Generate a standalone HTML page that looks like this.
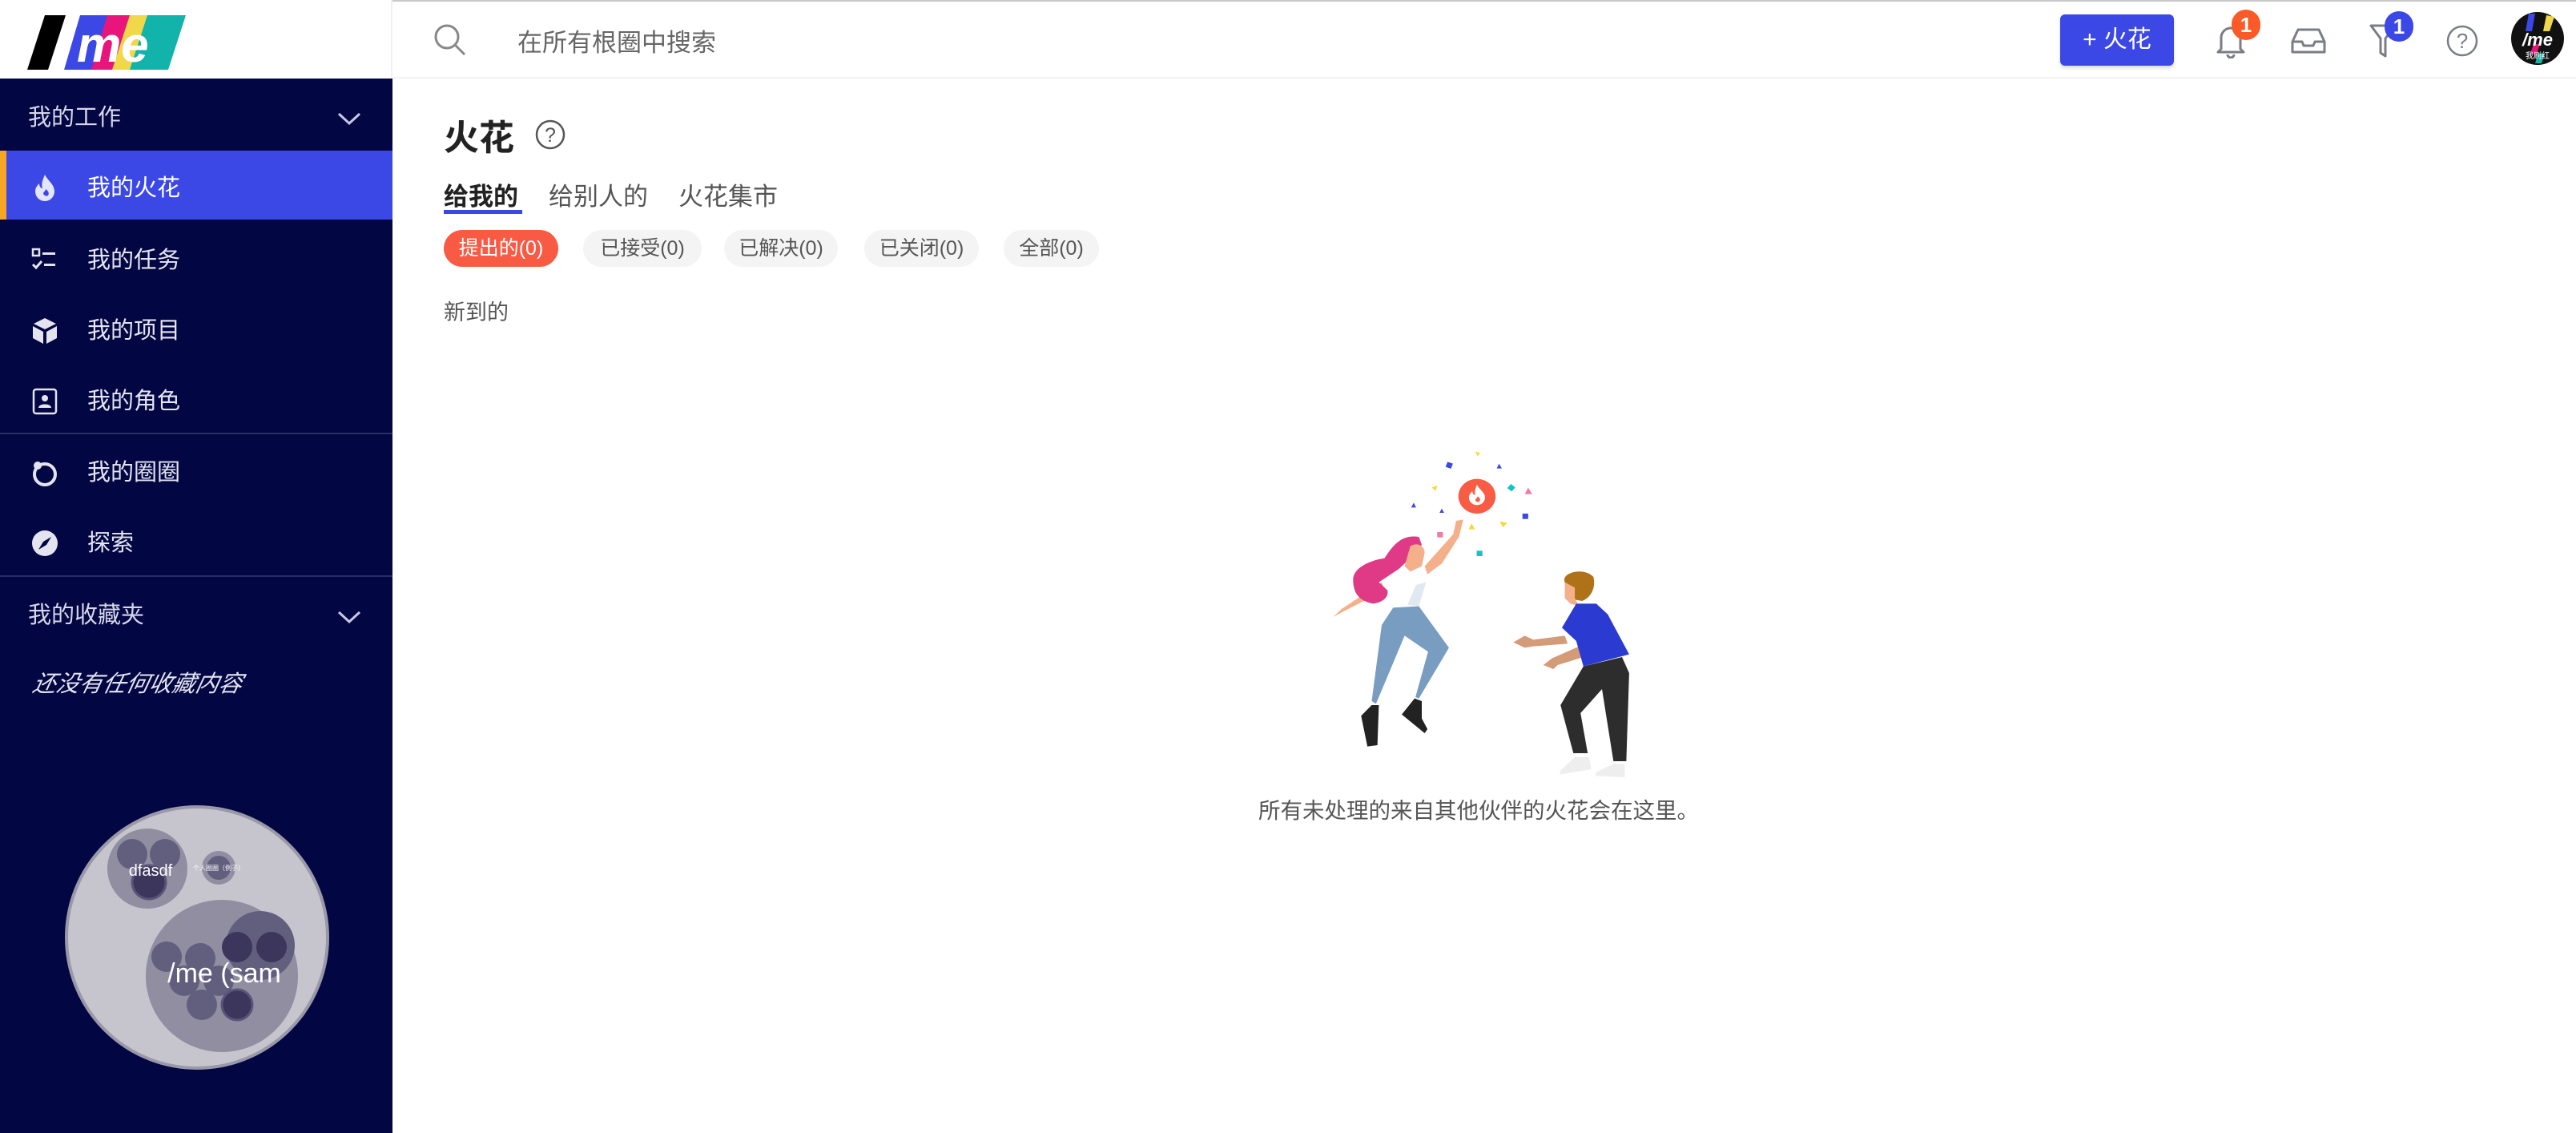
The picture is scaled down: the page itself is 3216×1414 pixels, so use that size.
<!DOCTYPE html>
<html><head><meta charset="utf-8">
<style>
*{margin:0;padding:0;box-sizing:border-box}
body{width:3216px;height:1414px;overflow:hidden;background:#fff;font-family:"Liberation Sans","Noto Sans CJK SC",sans-serif;position:relative}
.abs{position:absolute}
#side{left:0;top:98px;width:490px;height:1316px;background:#020642}
.hdrL{left:0;top:0;width:490px;height:98px;background:#fff;border-right:2px solid #f0f0f0}
.item{position:absolute;left:0;width:490px;height:88px;color:#e4e4f0;font-size:29px;line-height:88px}
.item .t{position:absolute;left:109px;top:0}
.item svg{position:absolute;left:38px;top:26px}
.sel{background:#3b48e6;color:#fff}
.sel:before{content:"";position:absolute;left:0;top:0;width:8px;height:100%;background:#f5a623}
.div{position:absolute;left:0;width:490px;height:2px;background:#2a2d62}
.sh{position:absolute;left:35px;color:#d6d6ea;font-size:29px}
.pill{position:absolute;top:287px;height:46px;border-radius:23px;background:#f4f4f4;color:#555;font-size:25px;line-height:46px;text-align:center}
</style></head><body>
<div class="abs hdrL">
<svg class="abs" style="left:34px;top:19px" width="200" height="70" viewBox="0 0 200 70">
<polygon points="22,0 48,0 26,68 0,68" fill="#000"/>
<polygon points="78,0 104,0 82,68 46,68 66,0" fill="#3b48e6"/>
<polygon points="100,0 130,0 108,68 80,68" fill="#e8157a"/>
<polygon points="128,0 152,0 130,68 106,68" fill="#f0d84a"/>
<polygon points="150,0 198,0 176,68 128,68" fill="#11b3aa"/>
<text x="62" y="58" font-size="62" font-weight="bold" font-style="italic" fill="#fff" font-family="Liberation Sans">me</text>
</svg>
</div>
<div class="abs" style="left:490px;top:0;width:2726px;height:98px;border-bottom:2px solid #f2f2f2;border-top:2px solid #c8c8c8"></div>
<svg class="abs" style="left:540px;top:28px" width="44" height="44" viewBox="0 0 44 44"><circle cx="18" cy="18" r="14" stroke="#888" stroke-width="3" fill="none"/><line x1="28" y1="28" x2="40" y2="40" stroke="#888" stroke-width="3"/></svg>
<div class="abs" style="left:646px;top:28px;font-size:31px;color:#666">在所有根圈中搜索</div>
<div class="abs" style="left:2572px;top:18px;width:142px;height:64px;background:#3b48e6;border-radius:6px;color:#fff;font-size:30px;line-height:64px;text-align:center;box-shadow:0 3px 4px rgba(0,0,0,.15)">+ 火花</div>
<svg class="abs" style="left:2765px;top:27px" width="40" height="46" viewBox="0 0 40 46"><path d="M8 34 V20 a12 12 0 0 1 24 0 V34 l4 4 H4 z" fill="none" stroke="#7a7d85" stroke-width="3" stroke-linejoin="round"/><path d="M16 41 a4 4 0 0 0 8 0" stroke="#7a7d85" stroke-width="3" fill="none"/></svg>
<div class="abs" style="left:2786px;top:12px;width:36px;height:38px;border-radius:18px;background:#fa5a28;color:#fff;font-size:26px;font-weight:bold;text-align:center;line-height:38px">1</div>
<svg class="abs" style="left:2859px;top:34px" width="46" height="34" viewBox="0 0 46 34"><path d="M3 18 L10 3 H36 L43 18 V31 H3 Z M3 18 H15 L17 23 H29 L31 18 H43" fill="none" stroke="#7a7d85" stroke-width="3" stroke-linejoin="round"/></svg>
<svg class="abs" style="left:2958px;top:28px" width="34" height="44" viewBox="0 0 34 44"><path d="M2 4 H32 L20 20 V42 L14 38 V20 Z" fill="none" stroke="#7a7d85" stroke-width="3" stroke-linejoin="round"/></svg>
<div class="abs" style="left:2977px;top:14px;width:36px;height:38px;border-radius:18px;background:#3b48e6;color:#fff;font-size:26px;font-weight:bold;text-align:center;line-height:38px">1</div>
<svg class="abs" style="left:3054px;top:31px" width="40" height="40" viewBox="0 0 40 40"><circle cx="20" cy="20" r="18" fill="none" stroke="#7a7d85" stroke-width="2.5"/><text x="20" y="29" font-size="26" text-anchor="middle" fill="#7a7d85" font-family="Liberation Sans">?</text></svg>
<svg class="abs" style="left:3135px;top:15px" width="66" height="66" viewBox="0 0 66 66"><circle cx="33" cy="33" r="33" fill="#111"/><polygon points="22,2 30,2 26,24 18,24" fill="#3b48e6"/><polygon points="44,4 54,6 48,24 40,24" fill="#f0d84a"/><polygon points="28,40 36,40 32,52 24,52" fill="#e8157a"/><polygon points="34,52 42,52 38,64 30,64" fill="#11b3aa"/><text x="33" y="42" font-size="22" font-weight="bold" font-style="italic" fill="#fff" text-anchor="middle" font-family="Liberation Sans">/me</text><text x="33" y="58" font-size="10" fill="#fff" text-anchor="middle" font-family="Noto Sans CJK SC">我刷红</text></svg>

<div id="side" class="abs">
<div class="sh" style="top:25px">我的工作</div>
<svg class="abs" style="left:420px;top:40px" width="32" height="20" viewBox="0 0 32 20"><path d="M3 4 L16 16 L29 4" stroke="#c8c8e6" stroke-width="3" fill="none"/></svg>
<div class="item sel" style="top:90px;height:86px;line-height:94px"><svg width="36" height="36" viewBox="0 0 36 36" style="top:28px"><path d="M18 2 C22 10 30 14 30 23 a12 12 0 0 1 -24 0 c0-5 3-8 5-10 c0 4 2 6 4 6 c-2-6 1-12 3-17z" fill="#e4e6ff"/><path d="M19 20 c3 2 5 5 3 8 a4 4 0 0 1 -6 -3 c1-2 3-3 3-5z" fill="#3b48e6"/></svg><span class="t">我的火花</span></div>
<div class="item" style="top:183px"><svg width="36" height="36" viewBox="0 0 36 36"><rect x="3" y="4" width="8" height="8" fill="none" stroke="#e4e4f0" stroke-width="2.5"/><path d="M3 23 l4 4 l7 -8" stroke="#e4e4f0" stroke-width="3" fill="none"/><rect x="15" y="8" width="16" height="3" fill="#e4e4f0"/><rect x="17" y="22" width="14" height="3" fill="#e4e4f0"/></svg><span class="t">我的任务</span></div>
<div class="item" style="top:271px"><svg width="36" height="36" viewBox="0 0 36 36"><path d="M18 2 L32 9 L18 16 L4 9 Z" fill="#e4e4f0"/><path d="M3 12 L16 19 V34 L3 27 Z M33 12 L20 19 V34 L33 27 Z" fill="#e4e4f0"/></svg><span class="t">我的项目</span></div>
<div class="item" style="top:359px"><svg width="36" height="36" viewBox="0 0 36 36"><rect x="4" y="3" width="28" height="30" rx="3" fill="none" stroke="#e4e4f0" stroke-width="2.5"/><circle cx="18" cy="14" r="4" fill="#e4e4f0"/><path d="M10 26 c0-6 16-6 16 0z" fill="#e4e4f0"/></svg><span class="t">我的角色</span></div>
<div class="div" style="top:442px"></div>
<div class="item" style="top:448px"><svg width="36" height="36" viewBox="0 0 36 36"><circle cx="18" cy="20" r="13" fill="none" stroke="#e4e4f0" stroke-width="4"/><circle cx="9" cy="9" r="5" fill="#e4e4f0"/></svg><span class="t">我的圈圈</span></div>
<div class="item" style="top:536px"><svg width="36" height="36" viewBox="0 0 36 36"><circle cx="18" cy="18" r="16" fill="#e4e4f0"/><path d="M26 10 L20 20 L10 26 L16 16 Z" fill="#020642"/></svg><span class="t">探索</span></div>
<div class="div" style="top:620px"></div>
<div class="sh" style="top:646px">我的收藏夹</div>
<svg class="abs" style="left:420px;top:662px" width="32" height="20" viewBox="0 0 32 20"><path d="M3 4 L16 16 L29 4" stroke="#c8c8e6" stroke-width="3" fill="none"/></svg>
<div class="abs" style="left:42px;top:732px;font-size:29px;color:#e4e4f0;font-style:italic;transform:skewX(-12deg)">还没有任何收藏内容</div>
<svg class="abs" style="left:80px;top:906px" width="332" height="332" viewBox="0 0 332 332">
<circle cx="166" cy="166" r="163" fill="#c6c5cd" stroke="#9998a8" stroke-width="4"/>
<circle cx="104" cy="80" r="50" fill="#908ea0"/>
<circle cx="85" cy="62" r="19" fill="#625e7e"/><circle cx="126" cy="62" r="19" fill="#625e7e"/><circle cx="106" cy="97" r="21" fill="#3c355c" stroke="#5a5578" stroke-width="3"/>
<circle cx="193" cy="79" r="21" fill="#908ea0"/><circle cx="193" cy="79" r="15" fill="#625e7e"/>
<circle cx="197" cy="214" r="95" fill="#908ea0"/>
<circle cx="245" cy="176" r="43" fill="#625e7e"/><circle cx="216" cy="178" r="19" fill="#3c355c"/><circle cx="259" cy="178" r="19" fill="#3c355c"/>
<circle cx="128" cy="190" r="19" fill="#625e7e"/><circle cx="170" cy="192" r="19" fill="#625e7e"/><circle cx="150" cy="220" r="19" fill="#625e7e"/><circle cx="193" cy="220" r="19" fill="#625e7e"/><circle cx="172" cy="250" r="19" fill="#625e7e"/><circle cx="216" cy="250" r="19" fill="#3c355c" stroke="#5a5578" stroke-width="3"/>
<text x="108" y="89" font-size="20" fill="#fff" text-anchor="middle" font-family="Liberation Sans">dfasdf</text>
<text x="193" y="82" font-size="8" fill="#fff" text-anchor="middle" font-family="Noto Sans CJK SC">个人圈圈（例子）</text>
<text x="200" y="222" font-size="34" fill="#fff" text-anchor="middle" font-family="Liberation Sans">/me (sam</text>
</svg>
</div>

<div class="abs" style="left:554px;top:136px;font-size:44px;font-weight:bold;color:#222">火花</div>
<svg class="abs" style="left:667px;top:148px" width="40" height="40" viewBox="0 0 40 40"><circle cx="20" cy="20" r="17" fill="none" stroke="#555" stroke-width="2.5"/><text x="20" y="29" font-size="25" text-anchor="middle" fill="#555" font-family="Liberation Sans">?</text></svg>
<div class="abs" style="left:554px;top:220px;font-size:31px;color:#222;font-weight:bold">给我的</div>
<div class="abs" style="left:554px;top:262px;width:98px;height:5px;background:#3b48e6"></div>
<div class="abs" style="left:685px;top:220px;font-size:31px;color:#555">给别人的</div>
<div class="abs" style="left:847px;top:220px;font-size:31px;color:#555">火花集市</div>
<div class="pill" style="left:554px;width:143px;background:#f85a44;color:#fff">提出的(0)</div>
<div class="pill" style="left:728px;width:148px">已接受(0)</div>
<div class="pill" style="left:904px;width:142px">已解决(0)</div>
<div class="pill" style="left:1079px;width:143px">已关闭(0)</div>
<div class="pill" style="left:1253px;width:119px">全部(0)</div>
<div class="abs" style="left:554px;top:368px;font-size:27px;color:#555">新到的</div>

<svg class="abs" style="left:1600px;top:540px" width="560" height="440" viewBox="0 0 1568 1320" preserveAspectRatio="none">
<polygon points="678,70 694,76 684,88" fill="#f5d933"/>
<rect x="576" y="112" width="20" height="20" fill="#3b48e6" transform="rotate(20 586 122)"/>
<polygon points="760,116 770,134 752,134" fill="#3b48e6"/>
<polygon points="525,205 545,198 538,218" fill="#f5d933"/>
<rect x="793" y="196" width="20" height="20" fill="#14c3c8" transform="rotate(40 803 206)"/>
<polygon points="862,206 876,230 850,230" fill="#f07aa0"/>
<polygon points="462,262 470,280 453,280" fill="#3b48e6"/>
<polygon points="560,284 568,300 552,300" fill="#3b48e6"/>
<rect x="842" y="303" width="20" height="20" fill="#3b48e6"/>
<polygon points="664,340 676,362 654,362" fill="#f5d933"/>
<polygon points="762,332 788,338 774,354" fill="#f5d933"/>
<rect x="544" y="372" width="20" height="20" fill="#f07aa0"/>
<rect x="682" y="442" width="20" height="20" fill="#14c3c8"/>
<circle cx="683" cy="238" r="65" fill="#f85c44"/>
<path d="M683 195 c10 20 28 28 28 48 a28 28 0 0 1 -56 0 c0-12 8-20 12-24 c0 8 4 14 10 14 c-4-14 2-28 6-38z" fill="#fff"/>
<path d="M685 238 c8 5 12 12 6 20 a9 9 0 0 1 -14 -6 c2-6 8-8 8-14z" fill="#f85c44"/>
<path d="M500 500 L600 380 L610 330 L635 325 L620 390 L560 490 L510 530 Z" fill="#f4b08a"/>
<path d="M380 530 L490 500 L515 540 L480 650 L400 655 L360 600 Z" fill="#fff"/>
<path d="M470 570 L505 560 L480 650 L440 645 Z" fill="#e2e8f0"/>
<path d="M350 560 L210 660 L180 690 L215 670 L360 590 Z" fill="#f4b08a"/>
<path d="M480 390 C420 380 390 420 360 470 C300 480 250 510 250 550 C250 600 270 630 320 640 C360 635 375 610 370 590 L340 560 L410 510 L440 480 L490 420 Z" fill="#e03a86"/>
<path d="M450 425 C470 410 500 420 500 450 L490 500 L450 520 L430 500 Z" fill="#f4b08a"/>
<path d="M390 655 L480 650 L585 805 L480 995 L468 990 L512 820 L430 760 L330 1015 L315 1005 L350 720 Z" fill="#789dc0"/>
<path d="M315 1020 L340 1020 L335 1170 L300 1175 L278 1060 Z" fill="#222"/>
<path d="M465 995 L490 1005 L490 1070 L510 1110 L500 1125 L420 1055 Z" fill="#222"/>
<path d="M988 550 C990 520 1060 505 1090 540 C1100 580 1080 620 1050 630 L1000 620 Z" fill="#b07219"/>
<path d="M990 560 L1025 580 L1025 620 L1040 650 L1010 640 L990 620 Z" fill="#f4b08a"/>
<path d="M810 785 L850 760 L880 775 L990 760 L1000 790 L880 800 L850 805 Z" fill="#d49b79"/>
<path d="M915 870 L945 845 L1040 800 L1055 840 L965 870 L950 885 Z" fill="#d49b79"/>
<path d="M1030 640 L1100 640 L1140 680 L1215 830 L1055 875 L1030 780 L980 730 Z" fill="#2b3bd1"/>
<path d="M1055 875 L1190 840 L1215 900 L1205 1230 L1160 1230 L1120 960 L1045 1050 L1070 1200 L1020 1200 L975 1020 Z" fill="#2d2d2d"/>
<path d="M1025 1215 L1075 1215 L1082 1260 L972 1280 L975 1265 Z" fill="#eeeeee"/>
<path d="M1160 1240 L1200 1240 L1200 1290 L1098 1285 L1100 1270 Z" fill="#eeeeee"/>
</svg>
<div class="abs" style="left:1566px;top:989px;width:560px;font-size:27.5px;color:#555;text-align:center;white-space:nowrap">所有未处理的来自其他伙伴的火花会在这里。</div>
</body></html>
